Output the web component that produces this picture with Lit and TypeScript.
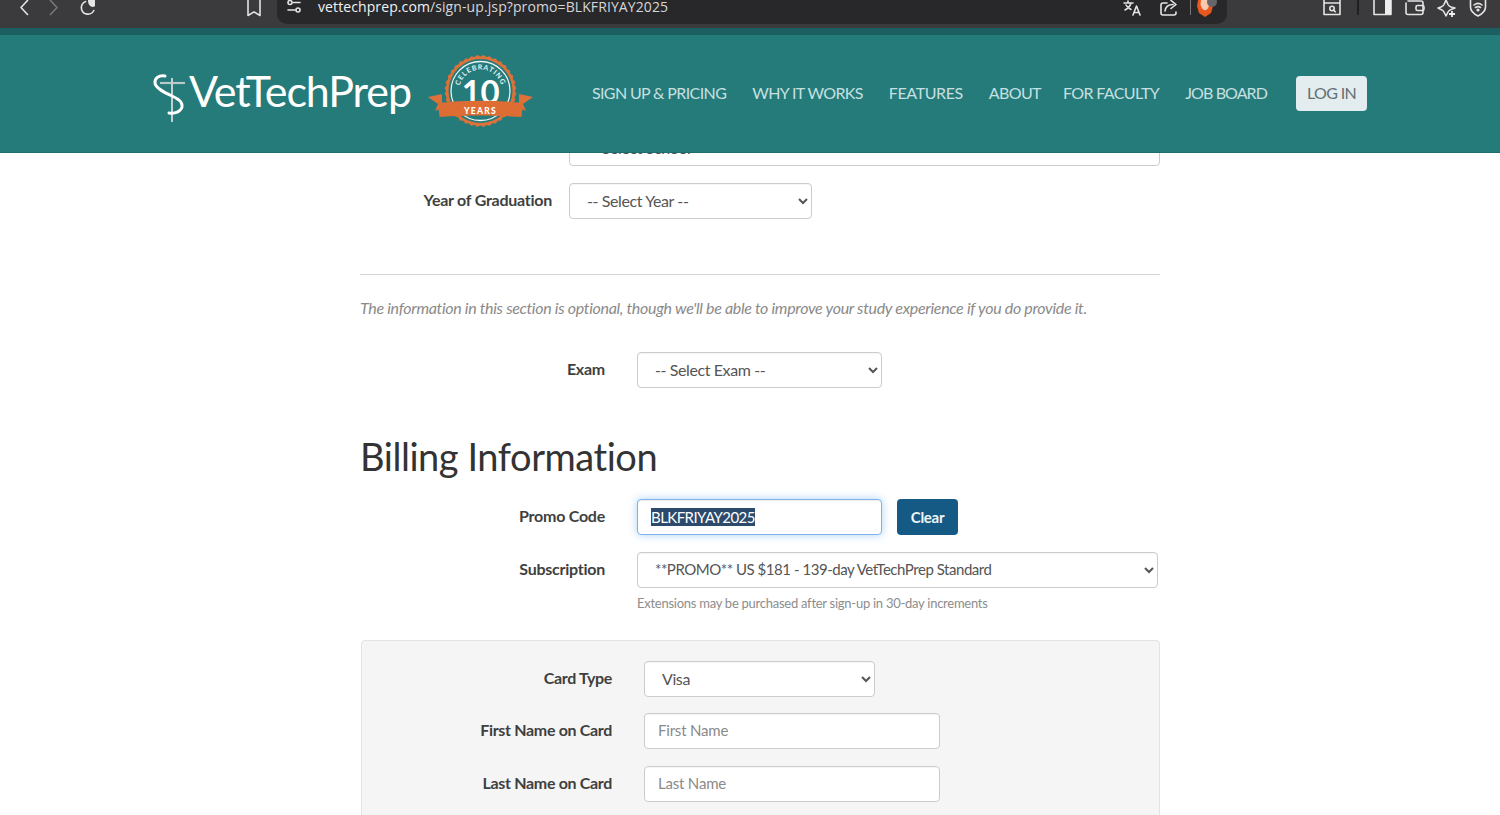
import { LitElement, html, css, svg } from "lit";
import { customElement } from "lit/decorators.js";

const scallop = () => {
  const n = 36, pts: string[] = [];
  for (let i = 0; i < n * 2; i++) {
    const r = i % 2 ? 36 : 34.4, a = (i * Math.PI) / n;
    pts.push(`${(52.5 + r * Math.cos(a)).toFixed(1)},${(37 + r * Math.sin(a)).toFixed(1)}`);
  }
  return pts.join(" ");
};

@customElement("app-root")
export class AppRoot extends LitElement {
  static styles = css`
    :host { display: block; width: 1500px; height: 815px; overflow: hidden; background: #fff; font-family: Lato, "Open Sans", sans-serif; color: #333; }
    .chrome { height: 28px; background: #3b3b3d; display: flex; align-items: flex-start; position: relative; }
    .chrome svg { display: block; flex: none; }
    .ic { stroke: #e4e4e4; fill: none; stroke-width: 1.6; stroke-linecap: round; stroke-linejoin: round; }
    .back { margin: 0 0 0 18px; }
    .fwd { margin-left: 18px; }
    .fwd path { stroke: #77777a; }
    .reload { margin-left: 19px; }
    .mark { margin-left: 147px; }
    .url { margin-left: 15px; width: 950px; height: 24px; background: #28282b; border-radius: 0 0 10px 10px; display: flex; align-items: flex-start; flex: none; }
    .tune { margin: 0 0 0 9px; }
    .addr { margin-left: 16px; line-height: 14px; color: #d6d6d8; letter-spacing: .1px; white-space: nowrap; font-family: "Open Sans", sans-serif; font-size: 14px; }
    .addr b { font-weight: 400; color: #f2f2f2; }
    .urlr { margin-left: auto; display: flex; align-items: flex-start; }
    .band { height: 7px; background: #1b5f60; }
    header { height: 118px; box-sizing: border-box; border-bottom: 1px solid #1f6d6d; background: #257a7a; display: flex; align-items: flex-start; position: relative; z-index: 2; }
    .logo { margin: 28px 0 0 152px; display: flex; align-items: flex-start; flex: none; }
    .word { font-size: 43px; line-height: 56px; color: #fff; letter-spacing: -1.1px; margin-left: 3px; }
    .badge { margin: 19px 0 0 17px; flex: none; display: block; }
    nav { display: flex; align-items: center; height: 35px; margin: 41px 0 0 0; font-size: 16px; color: #c6e0e0; letter-spacing: -.62px; white-space: nowrap; }
    nav a { padding-bottom: 2px; }
    nav a:nth-child(1) { margin-left: 58px; }
    nav a:nth-child(2) { margin-left: 26px; }
    nav a:nth-child(3) { margin-left: 26px; letter-spacing: -.4px; }
    nav a:nth-child(4) { margin-left: 26px; }
    nav a:nth-child(5) { margin-left: 22px; }
    nav a:nth-child(6) { margin-left: 26px; letter-spacing: -.9px; }
    .login { margin-left: 29px; height: 35px; width: 71px; box-sizing: border-box; border-radius: 4px; padding-bottom: 2px; background: #e3ecee; color: #5f7074; display: flex; align-items: center; justify-content: center; }
    main { height: 662px; overflow: hidden; position: relative; }
    .col { width: 800px; margin-left: 360px; margin-top: -23px; }
    .row { display: flex; align-items: center; height: 36px; }
    .lab { font-weight: 700; font-size: 16px; letter-spacing: -.25px; color: #3f3f3f; text-align: right; white-space: nowrap; flex: none; margin-top: -4px; }
    .l1 { width: 192px; margin-right: 17px; }
    .l2 { width: 245px; margin-right: 32px; }
    .l3 { width: 220px; margin-right: 32px; letter-spacing: -.33px; margin-top: -3px; }
    select, input { box-sizing: border-box; height: 36px; font-family: Lato, sans-serif; font-size: 16px; letter-spacing: -.4px; color: #555; background: #fff; border: 1px solid #ccc; border-radius: 4px; padding: 0 13px 2px; outline: none; box-shadow: inset 0 1px 1px rgba(0,0,0,.04); flex: none; }
    input { font-size: 15px; letter-spacing: -.2px; }
    input::placeholder { color: #8a8a8a; opacity: 1; }
    .sp17 { margin-top: 17px; }
    hr { border: 0; border-top: 1px solid #d4d4d4; margin: 55px 0 0; }
    .opt { margin: 22px 0 0; font-style: italic; font-size: 16px; line-height: 22px; letter-spacing: -.31px; color: #8a8a8a; white-space: nowrap; }
    .sp33 { margin-top: 33px; }
    h2 { font-weight: 400; font-size: 38px; line-height: 46px; margin: 45px 0 0; color: #333; letter-spacing: -.45px; }
    .sp18 { margin-top: 20px; }
    .promo { width: 245px; border-color: #7db3e6; box-shadow: 0 0 8px rgba(102,175,233,.55), inset 0 1px 1px rgba(0,0,0,.07); color: #e8eef4; padding: 0 13px; letter-spacing: -.55px; }
    .promo::selection { background: #2c4a6b; color: #fff; }
    .clear { margin-left: 15px; width: 61px; height: 36px; background: #155a85; color: #f1f6f9; border: 0; border-radius: 4px; font: 700 15px Lato, sans-serif; letter-spacing: -.3px; padding: 0; }
    .sub { width: 521px; font-size: 15px; letter-spacing: -.46px; }
    .help { margin: 7px 0 0 277px; font-size: 13px; line-height: 16px; letter-spacing: -.26px; color: #8d8d8d; white-space: nowrap; }
    .panel { margin-top: 29px; margin-left: 1px; box-sizing: border-box; height: 260px; background: #f5f5f5; border: 1px solid #e3e3e3; border-radius: 4px; padding: 20px 0 0 30px; }
    .panel .row + .row { margin-top: 16px; }
    .panel .row:last-child { margin-top: 17px; }
  `;

  render() {
    return html`
      <div class="chrome">
        <svg class="back" width="12" height="18" viewBox="0 0 12 18"><path class="ic" d="M9.5 0.5 3 7.5l6.5 7"/></svg>
        <svg class="fwd" width="12" height="18" viewBox="0 0 12 18"><path class="ic" d="M2.5 0.5 9 7.5l-6.5 7"/></svg>
        <svg class="reload" width="20" height="18" viewBox="0 0 20 18"><path class="ic" d="M14.8 10.5a6.6 6.6 0 0 1-12.2-1 6.6 6.6 0 0 1 4-8"/><path d="M9 0h7v6c-2 2-7 1-7-6z" fill="#e4e4e4"/></svg>
        <svg class="mark" width="16" height="18" viewBox="0 0 16 18"><path class="ic" d="M2 0v15.5l6-3.6 6 3.6V0"/></svg>
        <div class="url">
          <svg class="tune" width="16" height="16" viewBox="0 0 16 16"><g class="ic" stroke-width="1.2"><circle cx="4" cy="2.500" r="2"/><path d="M7 2.500h7M2 10h7"/><circle cx="12" cy="10" r="2"/></g></svg>
          <div class="addr"><b>vettechprep.com</b>/sign-up.jsp?promo=BLKFRIYAY2025</div>
          <div class="urlr">
            <svg width="22" height="18" viewBox="0 0 22 18" style="margin-right:15px"><g class="ic" stroke-width="1.2"><path d="M1 3h9M5 1v2M8 3c-.8 3-3 5.500-6 7M3 5c1 2 3 3.500 5 4.500M10 15l3.500-9 3.500 9M11.300 12.500h4.500"/></g></svg>
            <svg width="18" height="18" viewBox="0 0 18 18" style="margin-right:12px"><g class="ic" stroke-width="1.300"><path d="M7 3H3a2 2 0 0 0-2 2v8a2 2 0 0 0 2 2h11a2 2 0 0 0 2-2v-1"/><path d="M5 11c.5-4 3.500-6.500 8-6.500M11 .5l5 4-5 4"/></g></svg>
            <svg width="2" height="18" style="margin-right:5px"><rect width="1" height="15" fill="#77777a"/></svg>
            <svg width="24" height="18" viewBox="0 0 24 18" style="margin-right:6px"><path d="M1 0h14l1 6-2 7-6 4-6-4-2-7z" fill="#e8591f"/><path d="M4 0h8l.5 5-2 4-2.500 1.500L5.500 9l-2-4z" fill="#f6c9b1"/><circle cx="15" cy="2" r="5" fill="#66666a"/></svg>
          </div>
        </div>
        <svg width="18" height="18" viewBox="0 0 18 18" style="margin-left:96px;flex:none"><g class="ic" stroke-width="1.300"><path d="M1 0v14.500h16V0M1 3h16"/><circle cx="9" cy="8.500" r="2.200"/><path d="m10.500 10 1.800 1.800"/></g></svg>
        <svg width="2" height="15" style="margin-left:16px"><rect width="2" height="15" fill="#202022"/></svg>
        <svg width="20" height="18" viewBox="0 0 20 18" style="margin-left:14px"><path class="ic" d="M1 0v14.500h17V0"/><rect x="12" y="0" width="6" height="14" fill="#eee"/></svg>
        <svg width="20" height="18" viewBox="0 0 20 18" style="margin-left:12px"><g class="ic" stroke-width="1.300"><path d="M3 1h12M1 3v9.500a2 2 0 0 0 2 2h13a2 2 0 0 0 2-2V3a2 2 0 0 0-2-2"/><rect x="11" y="5.500" width="8" height="5" rx="1.500"/></g></svg>
        <svg width="20" height="18" viewBox="0 0 20 18" style="margin-left:12px"><path class="ic" d="M8 0l2 4.500c.6 1.200 1.500 2 3 2.500l4 1-4 1.500c-1.500.5-2.500 1.500-3 2.500L8 16l-2-4c-.5-1-1.500-2-3-2.500L0 8l3-1c1.500-.5 2.400-1.300 3-2.500z" transform="translate(1 0)"/><path d="M15 11v6M12 14h6" stroke="#eee" stroke-width="1.800"/></svg>
        <svg width="18" height="18" viewBox="0 0 18 18" style="margin-left:12px"><g class="ic" stroke-width="1.300"><path d="M1.500 0v7c0 4 3.500 7 7.500 9 4-2 7.500-5 7.500-9V0"/><path d="M5 5c2.500-2 5.500-2 8 0M6.500 7.500c1.500-1 3.500-1 5 0"/><circle cx="9" cy="10" r=".8"/></g></svg>
      </div>
      <div class="band"></div>
      <header>
        <div class="logo">
          <svg width="34" height="56" viewBox="0 0 34 56" style="margin-top:9px;flex:none">
            <path d="M8 11H33" stroke="#b9c9c9" stroke-width="2.200" fill="none"/>
            <path d="M20 6v44" stroke="#c2d0d0" stroke-width="2" fill="none"/>
            <path d="M13 4C7 3 2.500 6 3 11c.5 5 8 9 17 13 7 3 11 6 10 11-1 4-6 7-13 6" stroke="#fff" stroke-width="3" fill="none" stroke-linecap="round"/>
          </svg>
          <div class="word">VetTechPrep</div>
        </div>
        <svg class="badge" width="106" height="74" viewBox="0 0 106 74">
          ${svg`<polygon points="${scallop()}" fill="#de7138"/>`}
          <circle cx="52.500" cy="37" r="32" fill="#257a7a"/>
          <circle cx="52.500" cy="37" r="29.500" fill="none" stroke="#eaf2f2" stroke-width="1.300"/>
          <defs><path id="arc" d="M31 37a21.500 21.500 0 0 1 43 0"/></defs>
          <text font-family="Lato, sans-serif" font-weight="700" font-size="7" fill="#e8f2f2" letter-spacing=".9" text-anchor="middle"><textPath href="#arc" startOffset="50%">CELEBRATING</textPath></text>
          <text x="52.500" y="50" text-anchor="middle" font-family="Lato, sans-serif" font-weight="700" font-size="33" fill="#fff" letter-spacing="-.5">10</text>
          <path d="M0 43l14-3v14l-7 3 3-7z" fill="#de7138"/>
          <path d="M105 43l-14-3v14l7 3-3-7z" fill="#de7138"/>
          <path d="M10 49c28-3 57-3 85 0l-1.500 14c-27-2-55-2-82 0z" fill="#dd6d33"/>
          <text x="52.500" y="60" text-anchor="middle" font-family="Lato, sans-serif" font-weight="900" font-size="8.500" fill="#fff" letter-spacing="1.300">YEARS</text>
        </svg>
        <nav>
          <a>SIGN UP &amp; PRICING</a><a>WHY IT WORKS</a><a>FEATURES</a><a>ABOUT</a><a>FOR FACULTY</a><a>JOB BOARD</a><div class="login">LOG IN</div>
        </nav>
      </header>
      <main>
        <div class="col">
          <div class="row"><span class="lab l1">School</span><select style="width:591px"><option>-- Select School --</option></select></div>
          <div class="row sp17"><span class="lab l1">Year of Graduation</span><select style="width:243px"><option>-- Select Year --</option></select></div>
          <hr />
          <p class="opt">The information in this section is optional, though we'll be able to improve your study experience if you do provide it.</p>
          <div class="row sp33"><span class="lab l2">Exam</span><select style="width:245px"><option>-- Select Exam --</option></select></div>
          <h2>Billing Information</h2>
          <div class="row sp18"><span class="lab l2">Promo Code</span><input class="promo" .value=${"BLKFRIYAY2025"} /><button class="clear">Clear</button></div>
          <div class="row" style="margin-top:17px"><span class="lab l2">Subscription</span><select class="sub"><option>**PROMO** US $181 - 139-day VetTechPrep Standard</option></select></div>
          <div class="help">Extensions may be purchased after sign-up in 30-day increments</div>
          <div class="panel">
            <div class="row"><span class="lab l3">Card Type</span><select style="width:231px"><option>Visa</option></select></div>
            <div class="row"><span class="lab l3">First Name on Card</span><input style="width:296px" placeholder="First Name" /></div>
            <div class="row"><span class="lab l3">Last Name on Card</span><input style="width:296px" placeholder="Last Name" /></div>
          </div>
        </div>
      </main>
    `;
  }

  firstUpdated() {
    const el = this.renderRoot.querySelector(".promo") as HTMLInputElement;
    el.focus();
    el.select();
  }
}
